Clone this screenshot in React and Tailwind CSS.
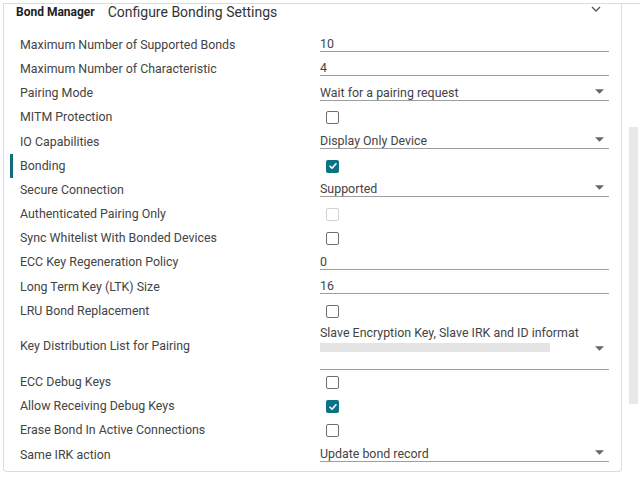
import { useState } from 'react'

const rows = [
  { label: 'Maximum Number of Supported Bonds', type: 'text', value: '10' },
  { label: 'Maximum Number of Characteristic', type: 'text', value: '4' },
  { label: 'Pairing Mode', type: 'select', value: 'Wait for a pairing request' },
  { label: 'MITM Protection', type: 'check', value: false },
  { label: 'IO Capabilities', type: 'select', value: 'Display Only Device' },
  { label: 'Bonding', type: 'check', value: true, active: true },
  { label: 'Secure Connection', type: 'select', value: 'Supported' },
  { label: 'Authenticated Pairing Only', type: 'check', value: false, disabled: true },
  { label: 'Sync Whitelist With Bonded Devices', type: 'check', value: false },
  { label: 'ECC Key Regeneration Policy', type: 'text', value: '0' },
  { label: 'Long Term Key (LTK) Size', type: 'text', value: '16' },
  { label: 'LRU Bond Replacement', type: 'check', value: false },
  { label: 'Key Distribution List for Pairing', type: 'multi', value: 'Slave Encryption Key, Slave IRK and ID informat' },
  { label: 'ECC Debug Keys', type: 'check', value: false },
  { label: 'Allow Receiving Debug Keys', type: 'check', value: true },
  { label: 'Erase Bond In Active Connections', type: 'check', value: false },
  { label: 'Same IRK action', type: 'select', value: 'Update bond record' },
]

function Caret() {
  return (
    <svg className="absolute right-[5px] top-[5px] h-[5px] w-[9px]" viewBox="0 0 10 5">
      <path d="M0 0h10L5 5z" fill="#666" />
    </svg>
  )
}

function Checkbox({ checked, disabled }) {
  if (checked) {
    return (
      <div className="ml-[6px] flex h-[13px] w-[13px] items-center justify-center rounded-[2px] bg-[#0b7285]">
        <svg className="h-[10px] w-[10px]" viewBox="0 0 10 10" fill="none" stroke="white" strokeWidth="1.6" strokeLinecap="round" strokeLinejoin="round">
          <path d="M2 5.2l2 2 4-4.4" />
        </svg>
      </div>
    )
  }
  return (
    <div
      className={
        disabled
          ? 'ml-[6px] h-[13px] w-[13px] rounded-[2px] border-[1.5px] border-[#d2d2d2]'
          : 'ml-[6px] h-[13px] w-[13px] rounded-[2px] border-[1.5px] border-[#6f6f6f]'
      }
    />
  )
}

function Field({ row }) {
  if (row.type === 'check') {
    return (
      <div className="flex h-full items-center">
        <Checkbox checked={row.value} disabled={row.disabled} />
      </div>
    )
  }
  if (row.type === 'multi') {
    return (
      <div className="relative h-full border-b border-[#9e9e9e] pt-[2px]">
        <div className="leading-[16px]">{row.value}</div>
        <div className="mt-[2px] h-[9px] w-[230px] bg-[#e4e4e4]" />
        <div className="absolute right-0 top-[18px] h-[10px] w-[20px]">
          <Caret />
        </div>
      </div>
    )
  }
  return (
    <div className="flex h-full items-end pb-[5px]">
      <div className="relative h-[17px] w-full border-b border-[#9e9e9e] pt-[1px] leading-[15px]">
        {row.value}
        {row.type === 'select' && <Caret />}
      </div>
    </div>
  )
}

export default function App() {
  const [open] = useState(true)

  return (
    <div className="flex h-[478px] w-[640px] overflow-hidden bg-white font-['Roboto',sans-serif] text-[12.4px] text-[#444]">
      <div className="flex w-[622px] flex-col pt-[3px]">
        <div className="ml-[3px] flex flex-col rounded-b-[4px] border border-t-0 border-[#dcdcdc] pb-[4px]">
          <div className="flex h-[17px] items-center border-t border-[#dcdcdc] pl-[12px] pr-[20px]">
            <span className="text-[12px] font-bold text-[#222]">Bond Manager</span>
            <span className="ml-[13px] text-[14px] text-[#333]">Configure Bonding Settings</span>
            <svg className="ml-auto mb-[6px] h-[6px] w-[10px]" viewBox="0 0 10 6" fill="none" stroke="#555" strokeWidth="1.3">
              <path d="M1 1l4 4 4-4" />
            </svg>
          </div>
          {open && (
            <div className="flex flex-col pt-[13px]">
              {rows.map((row) => (
                <div
                  key={row.label}
                  className={
                    row.type === 'multi'
                      ? 'relative grid h-[47px] grid-cols-[316px_289px]'
                      : 'relative grid h-[24.2px] grid-cols-[316px_289px]'
                  }
                >
                  {row.active && <div className="absolute left-[6px] top-[0px] h-[24px] w-[3px] bg-[#0e6e7e]" />}
                  <div className="flex items-center pl-[16px]">{row.label}</div>
                  <Field row={row} />
                </div>
              ))}
            </div>
          )}
        </div>
      </div>
      <div className="mt-[3px] flex w-[18px] flex-col border-t border-[#dcdcdc]">
        <div className="ml-[7px] mt-[123px] h-[277px] w-[9px] bg-[#e8e8e8]" />
      </div>
    </div>
  )
}
